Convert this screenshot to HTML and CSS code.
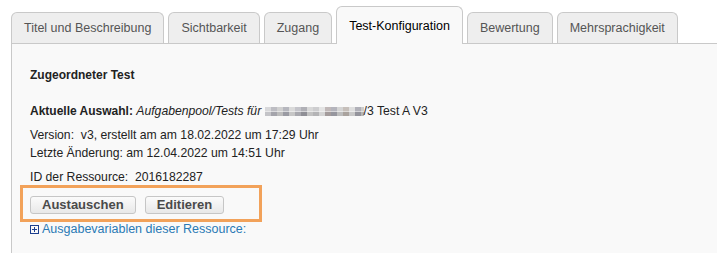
FILE: index.html
```html
<!DOCTYPE html>
<html lang="de">
<head>
<meta charset="utf-8">
<title>Test-Konfiguration</title>
<link rel="stylesheet" href="styles.css">
</head>
<body>
<div class="tabs">
  <div class="tab">Titel und Beschreibung</div>
  <div class="tab">Sichtbarkeit</div>
  <div class="tab">Zugang</div>
  <div class="tab active">Test-Konfiguration</div>
  <div class="tab">Bewertung</div>
  <div class="tab">Mehrsprachigkeit</div>
</div>
<div class="panel">
  <div class="title">Zugeordneter Test</div>
  <div class="line sel"><b class="label">Aktuelle Auswahl:</b> <i>Aufgabenpool/Tests für <span class="blur"></span></i>/3 Test A V3</div>
  <div class="line">Version:&nbsp; v3, erstellt am am 18.02.2022 um 17:29 Uhr</div>
  <div class="line gap">Letzte Änderung: am 12.04.2022 um 14:51 Uhr</div>
  <div class="line">ID der Ressource:&nbsp; 2016182287</div>
  <div class="actions">
    <button class="btn">Austauschen</button>
    <button class="btn">Editieren</button>
  </div>
  <a class="out" href="#">
    <svg class="plus" width="9" height="9" viewBox="0 0 9 9"><rect x="0.5" y="0.5" width="8" height="8" fill="none" stroke="#1c3f8f"/><path d="M2 4.5h5M4.5 2v5" stroke="#1c3f8f" fill="none"/></svg>
    <span>Ausgabevariablen dieser Ressource:</span>
  </a>
</div>
</body>
</html>
```
FILE: styles.css
```css
body {
  margin: 0;
  background: #fff;
  font-family: "Liberation Sans", Arial, sans-serif;
  color: #222;
}
.tabs {
  display: flex;
  align-items: flex-end;
  gap: 4px;
  padding: 6px 0 0 11px;
  position: relative;
  z-index: 1;
  margin-bottom: -1px;
}
.tab {
  box-sizing: border-box;
  height: 31px;
  margin-bottom: 1px;
  padding: 8px 12px 0;
  border: 1px solid #c9c9c9;
  border-bottom: 0;
  border-radius: 6px 6px 0 0;
  background: #eeeeee;
  color: #555;
  font-size: 12.5px;
  line-height: 14px;
  white-space: nowrap;
}
.tab.active {
  height: 38px;
  margin-bottom: 0;
  padding-top: 12px;
  background: #f9f9f9;
  color: #000;
}
.panel {
  margin-left: 11px;
  border-left: 1px solid #c9c9c9;
  border-top: 1px solid #c9c9c9;
  background: #f9f9f9;
  padding: 22px 18px 0;
  min-height: 187px;
  box-sizing: content-box;
  font-size: 12.2px;
}
.title {
  font-weight: bold;
  font-size: 12px;
  line-height: 18px;
  margin-bottom: 18px;
}
.line {
  line-height: 18px;
  white-space: nowrap;
}
.sel {
  margin-bottom: 6px;
}
.gap {
  margin-bottom: 6px;
}
.label {
  font-size: 12px;
}
.blur {
  display: inline-block;
  width: 99px;
  height: 9px;
  vertical-align: -1px;
  background:
    linear-gradient(to right,
      #d8d8da 0 6px, #bdbdc3 6px 12px, #d0d0d0 12px 18px, #b6b7be 18px 24px,
      #dadada 24px 30px, #c4c4ca 30px 36px, #b0b0b6 36px 42px, #d8d8d8 42px 48px,
      #cdcdcf 48px 54px, #e4e4e4 54px 60px, #c0b8b8 60px 66px, #b4b4bc 66px 72px,
      #d4d4d4 72px 78px, #c6bfba 78px 84px, #dedede 84px 90px, #b0b0b8 90px 96px,
      #cccccc 96px 99px) top / 100% 50% no-repeat,
    linear-gradient(to right,
      #c4c4c8 0 6px, #a4a4ab 6px 12px, #bcbcbc 12px 18px, #9a9ba3 18px 24px,
      #c6c6c6 24px 30px, #a8a8ae 30px 36px, #8f8f96 36px 42px, #c2c2c2 42px 48px,
      #b4b4b6 48px 54px, #d4d4d4 54px 60px, #a49c9c 60px 66px, #96969e 66px 72px,
      #bdbdbd 72px 78px, #aaa39e 78px 84px, #c8c8c8 84px 90px, #94949c 90px 96px,
      #b6b6b6 96px 99px) bottom / 100% 50% no-repeat;
}
.actions {
  box-sizing: border-box;
  width: 242px;
  margin: -1px 0 0 -10px;
  border: 3px solid #f2a25a;
  padding: 8px 7px 5px;
  display: flex;
  gap: 9px;
}
.btn {
  box-sizing: border-box;
  height: 18px;
  padding: 0 11px;
  border: 1px solid #c6c6c6;
  border-radius: 3px;
  background: linear-gradient(#fbfbfb, #e8e8e8);
  color: #4a4a4a;
  font-family: "Liberation Sans", Arial, sans-serif;
  font-weight: bold;
  font-size: 13px;
  line-height: 16px;
}
.out {
  display: flex;
  align-items: center;
  gap: 3px;
  line-height: 14px;
  font-size: 12.5px;
  color: #2a7ab5;
  text-decoration: none;
  white-space: nowrap;
}
.plus {
  display: block;
  flex: none;
}
```
